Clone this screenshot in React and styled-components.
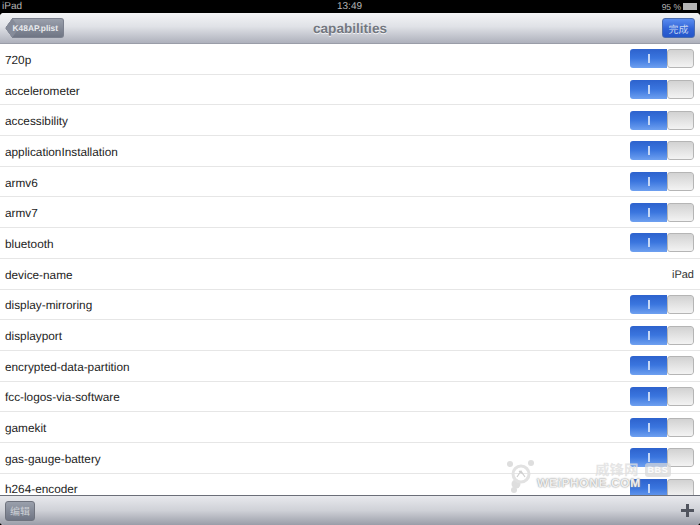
import styled, { createGlobalStyle } from "styled-components";

const rows = [
  { name: "720p" },
  { name: "accelerometer" },
  { name: "accessibility" },
  { name: "applicationInstallation" },
  { name: "armv6" },
  { name: "armv7" },
  { name: "bluetooth" },
  { name: "device-name", value: "iPad" },
  { name: "display-mirroring" },
  { name: "displayport" },
  { name: "encrypted-data-partition" },
  { name: "fcc-logos-via-software" },
  { name: "gamekit" },
  { name: "gas-gauge-battery" },
  { name: "h264-encoder" },
];

const GlobalStyle = createGlobalStyle`
  html, body {
    margin: 0;
    padding: 0;
    background: #000;
  }
  body {
    font-family: "Liberation Sans", Arial, sans-serif;
    text-rendering: geometricPrecision;
  }
`;

const Screen = styled.div`
  position: relative;
  width: 700px;
  height: 525px;
  display: flex;
  flex-direction: column;
  overflow: hidden;
  background: #000;
`;

const StatusBar = styled.div`
  height: 13px;
  flex: none;
  display: grid;
  grid-template-columns: 1fr auto 1fr;
  align-items: center;
  padding: 0 3px 0 2px;
  color: #b4b4b4;
  font-size: 10px;
`;

const StatusRight = styled.div`
  display: flex;
  justify-content: flex-end;
  align-items: center;
  gap: 2px;
  font-size: 8.5px;
`;

const Battery = styled.div`
  width: 12px;
  height: 5px;
  border: 1px solid #b4b4b4;
  background: #b4b4b4;
`;

const Window = styled.div`
  flex: 1;
  min-height: 0;
  display: flex;
  flex-direction: column;
  background: #fff;
  border-radius: 4px;
  overflow: hidden;
`;

const NavBar = styled.div`
  position: relative;
  height: 30px;
  flex: none;
  display: flex;
  align-items: center;
  justify-content: space-between;
  padding: 0 5px;
  background: linear-gradient(#f3f4f6 0%, #e0e2e7 45%, #aeb1bc 100%);
  border-bottom: 1px solid #9a9da8;
`;

const NavTitle = styled.div`
  position: absolute;
  left: 0;
  right: 0;
  text-align: center;
  color: #72777f;
  font-size: 13.6px;
  font-weight: bold;
  text-shadow: 0 1px 0 #f4f4f6;
`;

const BackButton = styled.div`
  position: relative;
  margin-left: 7px;
  height: 20px;
  width: 52px;
  box-sizing: border-box;
  display: flex;
  align-items: center;
  justify-content: flex-end;
  padding-right: 5px;
  color: #e9ebee;
  font-size: 8.4px;
  font-weight: bold;
  background: linear-gradient(#9aa0ac, #6f7584);
  border: 1px solid #7b808e;
  border-left: none;
  border-radius: 0 3px 3px 0;
  &::before {
    content: "";
    position: absolute;
    left: -7px;
    top: 2px;
    width: 14px;
    height: 14px;
    transform: scaleX(0.72) rotate(45deg);
    background: #858b99;
    border-left: 1px solid #7b808e;
    border-bottom: 1px solid #7b808e;
    border-radius: 0 0 0 2px;
    box-sizing: border-box;
  }
`;

const BackLabel = styled.span`
  position: relative;
`;

const DoneButton = styled.div`
  width: 33px;
  height: 20px;
  display: flex;
  align-items: center;
  justify-content: center;
  color: #c7d6f2;
  font-family: "Noto Sans CJK SC", sans-serif;
  font-size: 10px;
  border: 1px solid #4a6cb0;
  border-radius: 3px;
  background: linear-gradient(#5a8df0, #2f62d6 55%, #2456c9);
  box-sizing: border-box;
`;

const List = styled.div`
  flex: 1;
  min-height: 0;
  overflow: hidden;
`;

const Row = styled.div`
  height: 29.7px;
  box-sizing: content-box;
  display: flex;
  align-items: center;
  justify-content: space-between;
  padding: 0 6px 0 5px;
  border-bottom: 1px solid #e6e6e6;
  color: #1c1c1c;
  font-size: 11.8px;
`;

const RowName = styled.span`
  padding-top: 2px;
`;

const RowValue = styled.span`
  color: #333;
  font-size: 11px;
  padding-top: 2px;
`;

const Switch = styled.div`
  width: 64px;
  height: 19px;
  display: flex;
  border-radius: 3px;
  overflow: hidden;
  flex: none;
`;

const SwitchOn = styled.div`
  width: 37px;
  display: flex;
  align-items: center;
  justify-content: center;
  background: linear-gradient(#2d62cd 0%, #3a75de 48%, #6ea0f0 100%);
  &::before {
    content: "";
    width: 2px;
    height: 9px;
    background: #c6d8f6;
  }
`;

const SwitchOff = styled.div`
  flex: 1;
  box-sizing: border-box;
  border: 1px solid #b5b5b5;
  border-radius: 3px;
  background: linear-gradient(#d2d2d2, #f3f3f3);
`;

const ToolBar = styled.div`
  height: 29px;
  flex: none;
  display: flex;
  align-items: center;
  justify-content: space-between;
  padding: 0 5px;
  background: linear-gradient(#e8e9ed 0%, #cfd1d7 50%, #9a9da8 100%);
  border-top: 1px solid #6b6e78;
`;

const EditButton = styled.div`
  width: 30px;
  height: 20px;
  display: flex;
  align-items: center;
  justify-content: center;
  color: #cfd2d8;
  font-family: "Noto Sans CJK SC", sans-serif;
  font-size: 10px;
  border: 1px solid #6f737e;
  border-radius: 3px;
  background: linear-gradient(#9aa0ac, #6f7584);
  box-sizing: border-box;
`;

const Plus = styled.svg`
  width: 13px;
  height: 13px;
  color: #50545e;
  margin-right: 1px;
`;

const Watermark = styled.div`
  position: absolute;
  left: 506px;
  top: 460px;
  width: 165px;
  height: 34px;
`;

const LogoMark = styled.svg`
  position: absolute;
  left: 0;
  top: 0;
  width: 30px;
  height: 34px;
`;

const MarkCn = styled.div`
  position: absolute;
  left: 89px;
  top: 3px;
  display: flex;
  align-items: center;
  gap: 6px;
  color: rgba(222, 222, 222, 0.8);
  font-family: "Noto Sans CJK SC", sans-serif;
  font-size: 14.5px;
  line-height: 14px;
  font-weight: bold;
  white-space: nowrap;
`;

const MarkBadge = styled.span`
  background: rgba(215, 215, 215, 0.7);
  color: rgba(255, 255, 255, 0.9);
  font-family: "Liberation Sans", sans-serif;
  font-size: 9px;
  line-height: 14px;
  padding: 0 3px;
  border-radius: 3px;
  letter-spacing: 0.6px;
`;

const MarkEn = styled.div`
  position: absolute;
  left: 31px;
  top: 17px;
  color: rgba(245, 245, 245, 0.95);
  font-size: 12px;
  line-height: 12px;
  font-weight: bold;
  letter-spacing: 0.6px;
  white-space: nowrap;
  text-shadow: 0 0 1px #999, 0 0 2px #aaa;
`;

export default function App() {
  return (
    <Screen>
      <GlobalStyle />
      <StatusBar>
        <span>iPad</span>
        <span>13:49</span>
        <StatusRight>
          <span>95 %</span>
          <Battery />
        </StatusRight>
      </StatusBar>
      <Window>
        <NavBar>
          <BackButton>
            <BackLabel>K48AP.plist</BackLabel>
          </BackButton>
          <NavTitle>capabilities</NavTitle>
          <DoneButton>完成</DoneButton>
        </NavBar>
        <List>
          {rows.map((row) => (
            <Row key={row.name}>
              <RowName>{row.name}</RowName>
              {row.value ? (
                <RowValue>{row.value}</RowValue>
              ) : (
                <Switch>
                  <SwitchOn />
                  <SwitchOff />
                </Switch>
              )}
            </Row>
          ))}
        </List>
        <ToolBar>
          <EditButton>编辑</EditButton>
          <Plus viewBox="0 0 13 13">
            <path d="M5 0h3v5h5v3H8v5H5V8H0V5h5z" fill="currentColor" />
          </Plus>
        </ToolBar>
      </Window>
      <Watermark>
        <LogoMark viewBox="0 0 30 34">
          <g fill="#dedede">
            <circle cx="4" cy="4" r="3" />
            <circle cx="25" cy="3" r="3" />
            <circle cx="10" cy="24" r="4.5" />
            <circle cx="8" cy="30" r="3" />
          </g>
          <circle cx="15" cy="14" r="8" fill="none" stroke="#e2e2e2" strokeWidth="3" />
          <path d="M11 17l4-6 4 6M13 11l4 3" fill="none" stroke="#cfcfcf" strokeWidth="1.2" />
        </LogoMark>
        <MarkCn>
          威锋网 <MarkBadge>BBS</MarkBadge>
        </MarkCn>
        <MarkEn>WEiPHONE.COM</MarkEn>
      </Watermark>
    </Screen>
  );
}
